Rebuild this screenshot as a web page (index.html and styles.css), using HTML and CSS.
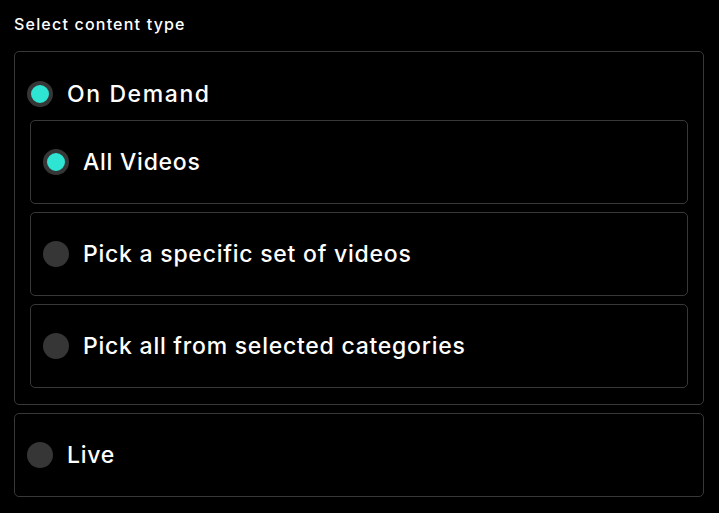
FILE: index.html
```html
<!DOCTYPE html>
<html>
<head>
<meta charset="utf-8">
<link rel="stylesheet" href="styles.css">
</head>
<body>
<div class="page">
  <div class="title">Select content type</div>
  <div class="options">
    <div class="group">
      <div class="group-head">
        <span class="radio checked"></span>
        <span class="label">On Demand</span>
      </div>
      <div class="sub-list">
        <div class="option">
          <span class="radio checked"></span>
          <span class="label">All Videos</span>
        </div>
        <div class="option">
          <span class="radio"></span>
          <span class="label">Pick a specific set of videos</span>
        </div>
        <div class="option">
          <span class="radio"></span>
          <span class="label">Pick all from selected categories</span>
        </div>
      </div>
    </div>
    <div class="option top-option">
      <span class="radio"></span>
      <span class="label">Live</span>
    </div>
  </div>
</div>
</body>
</html>
```
FILE: styles.css
```css
html, body {
  margin: 0;
  padding: 0;
  background: #000;
}
body {
  font-family: Inter, "Noto Sans", sans-serif;
  color: #fff;
}
.page {
  padding: 13px 15px 0 14px;
}
.title {
  font-size: 16px;
  font-weight: 500;
  line-height: 22px;
  letter-spacing: 1.2px;
  margin-bottom: 16px;
}
.options {
  display: flex;
  flex-direction: column;
  gap: 8px;
}
.group {
  border: 1px solid #383838;
  border-radius: 5px;
  padding: 15px 15px 16px;
}
.group-head {
  height: 53px;
  margin-left: -3px;
  display: flex;
  align-items: center;
  gap: 14px;
}
.sub-list {
  display: flex;
  flex-direction: column;
  gap: 8px;
}
.option {
  height: 82px;
  border: 1px solid #383838;
  border-radius: 5px;
  padding-left: 12px;
  display: flex;
  align-items: center;
  gap: 14px;
}
.radio {
  width: 26px;
  height: 26px;
  border-radius: 50%;
  background: #363636;
  box-sizing: border-box;
  flex-shrink: 0;
}
.radio.checked {
  background: #2ee5d3;
  border: 4px solid #363636;
}
.label {
  font-size: 23px;
  font-weight: 500;
  line-height: 30px;
  letter-spacing: 0.75px;
}
.group-head .label {
  letter-spacing: 1.6px;
}
```
